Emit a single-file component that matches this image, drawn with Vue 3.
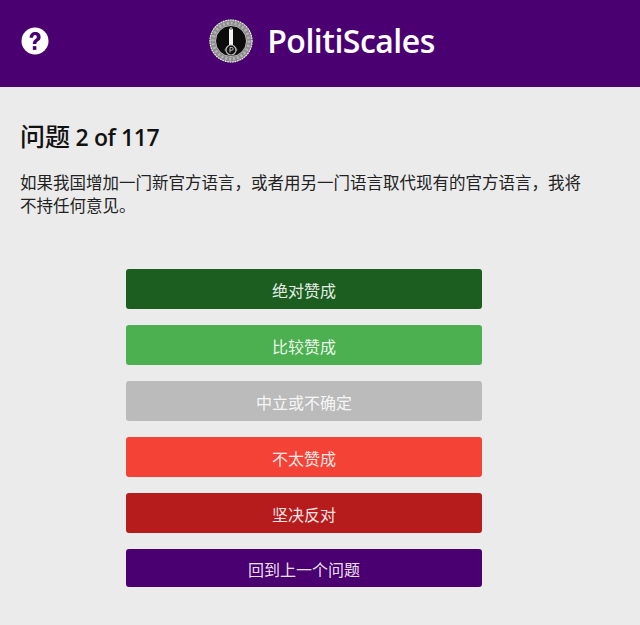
<template>
  <div class="page">
    <header class="topbar">
      <svg class="help" viewBox="0 0 28 28" width="28" height="28">
        <circle cx="14" cy="14" r="13.5" fill="#fff" />
        <g transform="translate(14 14) scale(1.15 1.2) translate(-14 -14)" fill="#4b0072">
          <path d="M9.3 11.2c.2-3 2.2-4.6 4.900-4.600 2.800 0 4.700 1.700 4.700 4 0 1.800-1 2.800-2.300 3.700-1.200.8-1.400 1.200-1.400 2.300h-3.100c-.1-1.900.5-2.900 1.900-3.900 1.100-.8 1.600-1.300 1.600-2.100 0-.9-.7-1.500-1.600-1.500-1 0-1.600.7-1.700 2.100z" />
          <rect x="12.100" y="18.300" width="3.100" height="3.100" />
        </g>
      </svg>
      <div class="brand">
        <svg class="logo" viewBox="0 0 44 44" width="44" height="44">
          <circle cx="22" cy="22" r="21.500" fill="#8c8c8c" />
          <circle cx="22" cy="22" r="21" fill="none" stroke="#eee" stroke-width="1.200" stroke-dasharray="1.500 1" />
          <circle cx="22" cy="22" r="18" fill="none" stroke="#b4b4b4" stroke-width="3" stroke-dasharray="2 2" />
          <circle cx="22" cy="22" r="15.500" fill="#0c0c0c" stroke="#ddd" stroke-width="0.800" />
          <path d="M15 31 Q22 22 29 31 Q22 38 15 31z" fill="#555" />
          <rect x="20" y="10" width="4" height="16" fill="#f2f2f2" />
          <circle cx="22" cy="9.500" r="1.500" fill="#999" />
          <circle cx="22" cy="31" r="5" fill="#111" stroke="#bbb" stroke-width="1.200" />
          <path d="M21 33.500v-5h1.800a1.300 1.300 0 0 1 0 2.800H21" fill="none" stroke="#ddd" stroke-width="0.800" />
        </svg>
        <span class="name">PolitiScales</span>
      </div>
    </header>
    <main class="content">
      <h1 class="title"><span class="title-cjk">问题</span> 2 of 117</h1>
      <p class="question">如果我国增加一门新官方语言，或者用另一门语言取代现有的官方语言，我将不持任何意见。</p>
      <div class="answers">
        <button v-for="a in answers" :key="a.label" class="answer" :style="{ background: a.color }">{{ a.label }}</button>
        <button class="answer back">回到上一个问题</button>
      </div>
    </main>
  </div>
</template>

<script setup>
const answers = [
  { label: '绝对赞成', color: '#1b5e20' },
  { label: '比较赞成', color: '#4caf50' },
  { label: '中立或不确定', color: '#bbbbbb' },
  { label: '不太赞成', color: '#f44336' },
  { label: '坚决反对', color: '#b71c1c' }
]
</script>

<style>
html,
body {
  margin: 0;
  background: #ebebeb;
}
</style>

<style scoped>
.page {
  min-height: 625px;
  background: #ebebeb;
  font-family: "Open Sans", "Noto Sans CJK SC", sans-serif;
  color: #111;
}

.topbar {
  height: 87px;
  background: #4b0072;
  display: flex;
  align-items: center;
  justify-content: center;
  position: relative;
}

.help {
  position: absolute;
  left: 21px;
  top: 27px;
}

.brand {
  display: flex;
  align-items: center;
  gap: 14px;
  margin-top: -6px;
  margin-left: 4px;
}

.name {
  color: #fff;
  font-size: 32px;
  font-weight: 600;
  letter-spacing: -0.5px;
}

.content {
  padding: 34px 52px 0 20px;
}

.title {
  margin: 0;
  height: 32px;
  font-size: 23px;
  font-weight: 600;
  line-height: 32px;
  letter-spacing: -0.4px;
}

.title-cjk {
  font-size: 25px;
  font-weight: 500;
  line-height: 1;
  letter-spacing: 0;
}

.question {
  margin: 18px 0 0;
  font-size: 16.5px;
  line-height: 23px;
  color: #222;
}

.answers {
  margin: 52px auto 0;
  width: 356px;
  display: flex;
  flex-direction: column;
  gap: 16px;
}

.answer {
  height: 40px;
  border: none;
  border-radius: 3px;
  padding: 2px 0 0;
  color: rgba(255, 255, 255, 0.9);
  font-family: inherit;
  font-size: 16px;
}

.back {
  height: 38px;
  background: #4b0072;
}
</style>
